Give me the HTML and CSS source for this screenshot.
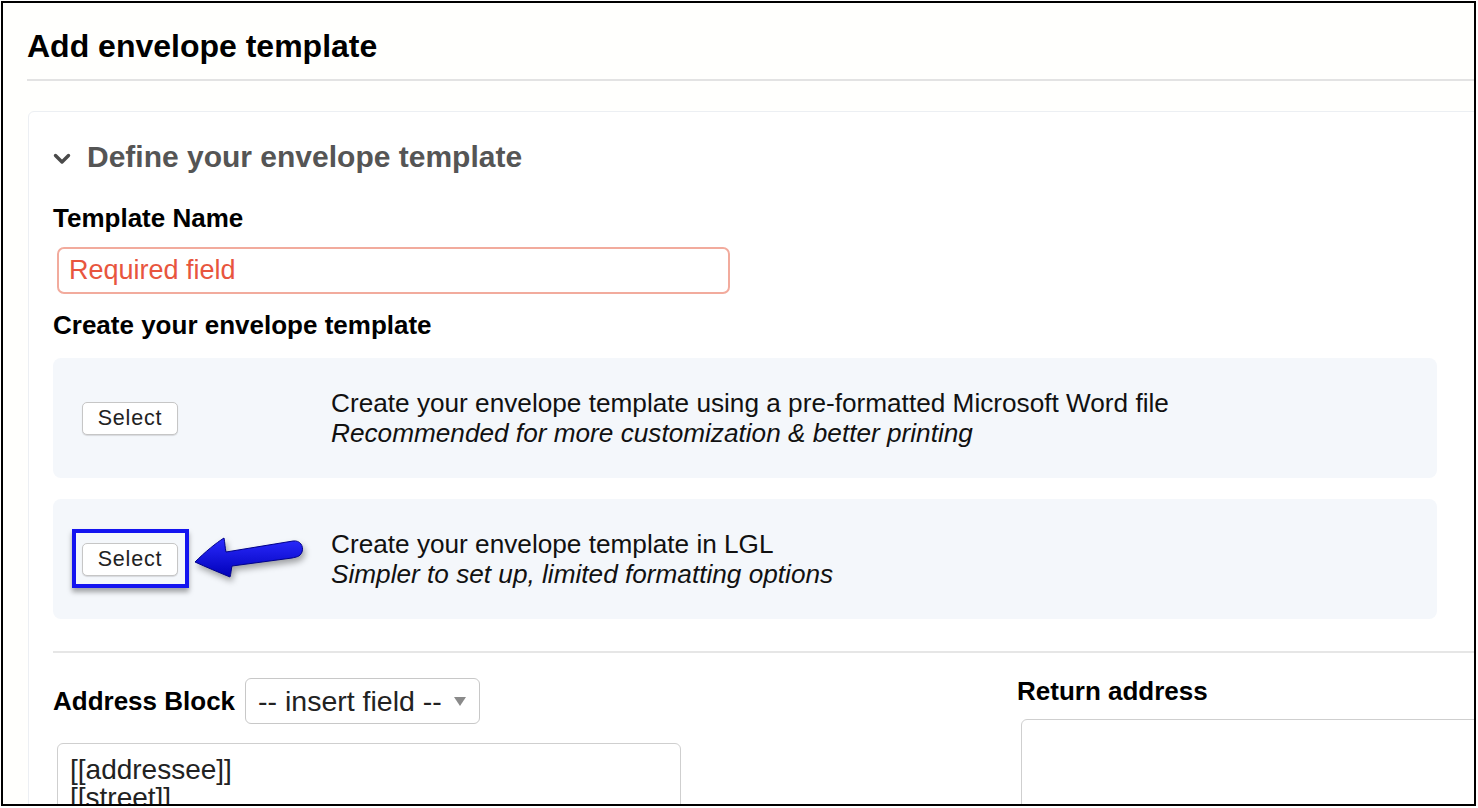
FILE: index.html
```html
<!DOCTYPE html>
<html lang="en">
<head>
<meta charset="utf-8">
<title>Add envelope template</title>
<link rel="stylesheet" href="styles.css">
</head>
<body>
<div class="frame">
  <header class="page-head">
    <h1>Add envelope template</h1>
  </header>
  <section class="card">
    <div class="card-head">
      <svg class="chevron" width="18" height="12" viewBox="0 0 18 12"><path d="M2.5 2.5 L9 9 L15.5 2.5" fill="none" stroke="#4a4a4a" stroke-width="3.4" stroke-linecap="round" stroke-linejoin="round"/></svg>
      <h2>Define your envelope template</h2>
    </div>
    <label class="field-label first">Template Name</label>
    <input class="name-input" type="text" placeholder="Required field">
    <div class="field-label section-label">Create your envelope template</div>

    <div class="option">
      <div class="opt-btn"><button class="btn">Select</button></div>
      <div class="opt-text">
        <div>Create your envelope template using a pre-formatted Microsoft Word file</div>
        <div class="em">Recommended for more customization &amp; better printing</div>
      </div>
    </div>

    <div class="option option-second">
      <div class="opt-btn">
        <div class="btn-wrap">
          <button class="btn">Select</button>
          <span class="highlight"></span>
        </div>
      </div>
      <div class="opt-text">
        <div>Create your envelope template in LGL</div>
        <div class="em">Simpler to set up, limited formatting options</div>
      </div>
      <svg class="arrow" width="122" height="55" viewBox="0 0 122 55">
        <defs>
          <linearGradient id="ag" x1="0" y1="0" x2="0" y2="1">
            <stop offset="0" stop-color="#2b2bff"/>
            <stop offset="1" stop-color="#0000b8"/>
          </linearGradient>
        </defs>
        <path d="M5 32 C15 22 26 13 34 8 C35 13 35 18 36 22 L103 11 C110 10 114 16 112 22 C110 27 106 27 102 28 L42 36 C41 40 41 44 40 47 C28 42 16 37 5 32 Z" fill="url(#ag)" stroke="#00008a" stroke-width="1"/>
      </svg>
    </div>

    <div class="sep"></div>

    <div class="addr-row">
      <div class="addr-col">
        <div class="addr-head">
          <span class="field-label inline">Address Block</span>
          <div class="select">-- insert field --<span class="caret"></span></div>
        </div>
        <textarea class="addr-text">[[addressee]]
[[street]]
[[city]], [[state]] [[zip]]</textarea>
      </div>
      <div class="return-col">
        <div class="field-label inline">Return address</div>
        <div class="return-box"></div>
      </div>
    </div>
  </section>
</div>
</body>
</html>
```
FILE: styles.css
```css
html, body {
  margin: 0;
  padding: 0;
  background: #ffffff;
}
body {
  font-family: "Liberation Sans", Arial, sans-serif;
  color: #000;
}
.frame {
  margin: 1px 0 0 1px;
  width: 1475px;
  height: 805px;
  border: 2px solid #000;
  box-sizing: border-box;
  overflow: hidden;
  background: #fffffd;
}
.page-head {
  margin-left: 24px;
  padding-top: 25px;
  padding-bottom: 15px;
  border-bottom: 2px solid #e3e3e3;
}
.page-head h1 {
  margin: 0;
  font-size: 32px;
  line-height: 36px;
  font-weight: bold;
}
.card {
  margin: 30px 0 0 25px;
  width: 1500px;
  border: 1px solid #eceff3;
  border-radius: 6px;
  padding: 28px 24px 0 24px;
  background: #fff;
  box-sizing: border-box;
  height: 760px;
}
.card-head {
  display: flex;
  align-items: center;
  gap: 16px;
}
.chevron {
  margin-top: 4px;
  flex: none;
}
.card-head h2 {
  margin: 0;
  font-size: 30px;
  line-height: 34px;
  font-weight: bold;
  color: #555;
}
.field-label {
  display: block;
  font-size: 26px;
  line-height: 30px;
  font-weight: bold;
}
.field-label.first {
  margin-top: 29px;
}
.name-input {
  display: block;
  margin: 14px 0 0 4px;
  width: 673px;
  height: 47px;
  box-sizing: border-box;
  border: 2px solid #f2ab9d;
  border-radius: 7px;
  padding: 0 10px;
  font-family: "Liberation Sans", Arial, sans-serif;
  font-size: 27px;
  background: #fff;
  outline: none;
}
.name-input::placeholder {
  color: #e8553e;
  opacity: 1;
}
.section-label {
  margin-top: 16px;
}
.option {
  width: 1384px;
  height: 120px;
  box-sizing: border-box;
  background: #f4f7fb;
  border-radius: 8px;
  display: grid;
  grid-template-columns: 278px 1fr;
  align-items: center;
  margin-top: 18px;
}
.option-second {
  margin-top: 21px;
  position: relative;
}
.opt-btn {
  padding-left: 29px;
  display: flex;
  align-items: center;
}
.btn {
  width: 96px;
  height: 33px;
  padding: 0;
  margin: 0;
  border: 1px solid #c6c6c6;
  border-radius: 5px;
  background: #fff;
  box-shadow: 0 1px 1px rgba(0, 0, 0, 0.12);
  font-family: "Liberation Sans", Arial, sans-serif;
  font-size: 21.5px;
  letter-spacing: 0.8px;
  color: #222;
}
.btn-wrap {
  position: relative;
  display: flex;
}
.highlight {
  position: absolute;
  left: -10px;
  top: -14px;
  width: 117px;
  height: 59px;
  box-sizing: border-box;
  border: 4.5px solid #1414f0;
  box-shadow: 0 4px 5px rgba(0, 0, 0, 0.35);
}
.opt-text {
  font-size: 26.2px;
  line-height: 30px;
  color: #111;
}
.opt-text .em {
  font-style: italic;
}
.arrow {
  position: absolute;
  left: 137px;
  top: 31px;
  filter: drop-shadow(2px 4px 3px rgba(0, 0, 0, 0.35));
}
.sep {
  margin-top: 32px;
  border-top: 2px solid #e6e6e6;
}
.addr-row {
  display: flex;
  align-items: flex-start;
}
.addr-col {
  width: 964px;
  flex: none;
  padding-top: 25px;
}
.addr-head {
  display: flex;
  align-items: center;
  gap: 10px;
}
.field-label.inline {
  display: block;
}
.select {
  position: relative;
  width: 235px;
  height: 46px;
  box-sizing: border-box;
  border: 1px solid #c8c8c8;
  border-radius: 6px;
  background: #fff;
  padding-left: 12px;
  font-size: 28.5px;
  line-height: 44px;
  color: #222;
}
.caret {
  position: absolute;
  right: 13px;
  top: 18px;
  width: 0;
  height: 0;
  border-left: 6.5px solid transparent;
  border-right: 6.5px solid transparent;
  border-top: 9px solid #8a8a8a;
}
.addr-text {
  display: block;
  margin: 19px 0 0 4px;
  width: 624px;
  height: 140px;
  box-sizing: border-box;
  border: 1.5px solid #cfcfcf;
  border-radius: 6px;
  padding: 12px 12px;
  font-family: "Liberation Sans", Arial, sans-serif;
  font-size: 28px;
  line-height: 28px;
  color: #222;
  resize: none;
  background: #fff;
  overflow: hidden;
}
.return-col {
  padding-top: 23px;
  flex: 1;
}
.return-box {
  margin: 13px 0 0 4px;
  height: 140px;
  border: 1.5px solid #cfcfcf;
  border-radius: 6px;
  background: #fff;
}
```
